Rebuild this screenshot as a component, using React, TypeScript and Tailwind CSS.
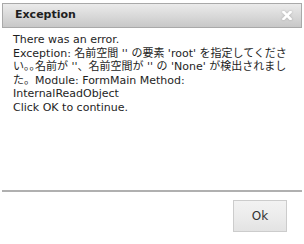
export default function App() {
  const lines = [
    "There was an error.",
    "Exception: 名前空間 '' の要素 'root' を指定してくださ",
    "い｡｡名前が ''、名前空間が '' の 'None' が検出されまし",
    "た。Module: FormMain Method:",
    "InternalReadObject",
    "Click OK to continue.",
  ];

  return (
    <div className="w-[304px] h-[244px] bg-white flex flex-col font-['DejaVu_Sans','Noto_Sans_CJK_JP',sans-serif]">
      {/* title bar */}
      <div className="mt-[3px] mx-[2px] h-[25px] flex items-center justify-between pl-[12px] pr-[9px] border border-[#a9a9a9] bg-gradient-to-b from-[#ebebeb] to-[#c8c8c8]">
        <span className="text-[11px] font-bold text-[#1f1f1f]">Exception</span>
        <svg width="10" height="9" viewBox="0 0 10 9" className="drop-shadow-[0_0_1px_rgba(0,0,0,0.2)]">
          <path d="M1.5 1 L8.5 8 M8.5 1 L1.5 8" stroke="white" strokeWidth="2.6" strokeLinecap="square" />
        </svg>
      </div>

      {/* message */}
      <div className="flex-1 pt-[5px] pl-[13px] text-[11px] leading-[13.5px] text-[#1e1e1e]">
        {lines.map((line, i) => (
          <div key={i} className="whitespace-nowrap">
            {line}
          </div>
        ))}
      </div>

      <div className="mx-[2px] h-[2px] bg-[#b0b0b0]" />

      {/* footer */}
      <div className="h-[52px] flex justify-end items-start pt-[8px] pr-[17px]">
        <button className="w-[54px] h-[32px] border border-[#cccccc] bg-gradient-to-b from-[#f2f2f2] via-[#ececec] to-[#e3e3e3] text-[12px] text-[#333]">
          Ok
        </button>
      </div>
    </div>
  );
}
